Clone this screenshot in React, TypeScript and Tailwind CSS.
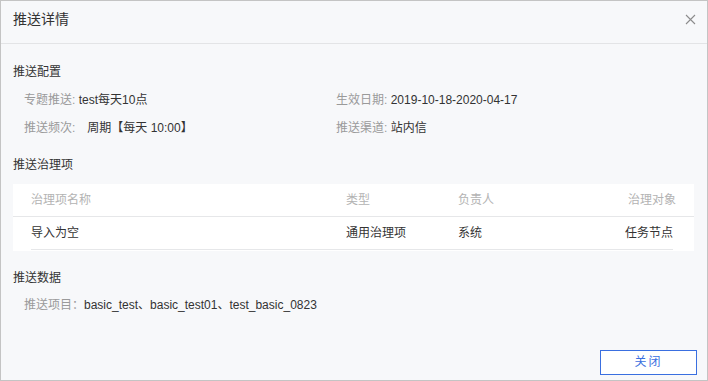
import React from "react";

const font = { fontFamily: '"Liberation Sans", "Noto Sans CJK SC", sans-serif' };

export default function App() {
  return (
    <div
      className="w-[708px] h-[381px] bg-[#f7f8fa] border border-[#c4c4c4] flex flex-col text-[12px] text-[#333]"
      style={font}
    >
      <div className="h-[43px] shrink-0 border-b border-[#e3e4e6] flex items-start justify-between pl-[12px] pr-[13px] pt-[9px]">
        <div className="text-[14px] leading-[18px] text-[#333]">推送详情</div>
        <svg width="11" height="11" viewBox="0 0 11 11" className="mt-[4px] mr-[-2px]">
          <path d="M1 1 L10 10 M10 1 L1 10" stroke="#8c8c8c" strokeWidth="1.1" fill="none" />
        </svg>
      </div>

      <div className="pl-[12px] pr-[13px] flex flex-col">
        <div className="mt-[18px] h-[20px] leading-[20px]">推送配置</div>
        <div className="mt-[8px] h-[20px] leading-[20px] pl-[11px] grid grid-cols-[312px_1fr]">
          <div>
            <span className="text-[#9a9a9a]">专题推送:</span> <span>test每天10点</span>
          </div>
          <div>
            <span className="text-[#9a9a9a]">生效日期:</span> <span>2019-10-18-2020-04-17</span>
          </div>
        </div>
        <div className="mt-[8px] h-[20px] leading-[20px] pl-[11px] grid grid-cols-[312px_1fr]">
          <div className="flex">
            <span className="text-[#9a9a9a]">推送频次:</span>
            <span className="ml-[12px]">周期【每天 10:00】</span>
          </div>
          <div>
            <span className="text-[#9a9a9a]">推送渠道:</span> <span>站内信</span>
          </div>
        </div>

        <div className="mt-[17px] h-[20px] leading-[20px]">推送治理项</div>

        <div className="mt-[9px] bg-white">
          <div className="h-[33px] border-b border-[#e6e7e9] px-[18px] grid grid-cols-[315px_112px_1fr_auto] items-center text-[#b3b3b3]">
            <div>治理项名称</div>
            <div>类型</div>
            <div>负责人</div>
            <div className="text-right">治理对象</div>
          </div>
          <div className="pb-[1px]">
            <div className="h-[33px] border-b border-[#e6e7e9] ml-[18px] mr-[21px] grid grid-cols-[315px_112px_1fr_auto] items-center text-[#333]">
              <div>导入为空</div>
              <div>通用治理项</div>
              <div>系统</div>
              <div className="text-right">任务节点</div>
            </div>
          </div>
        </div>

        <div className="mt-[17px] h-[20px] leading-[20px]">推送数据</div>
        <div className="mt-[7px] h-[20px] leading-[20px] pl-[11px]">
          <span className="text-[#9a9a9a]">推送项目：</span>
          <span>basic_test、basic_test01、test_basic_0823</span>
        </div>
      </div>

      <div className="flex-1" />
      <div className="flex justify-end pr-[10px] pb-[5px]">
        <button className="w-[97px] h-[25px] border border-[#3a6fe0] bg-white text-[#3a6fe0] text-[12px] leading-[23px] tracking-[2px]">
          关闭
        </button>
      </div>
    </div>
  );
}
